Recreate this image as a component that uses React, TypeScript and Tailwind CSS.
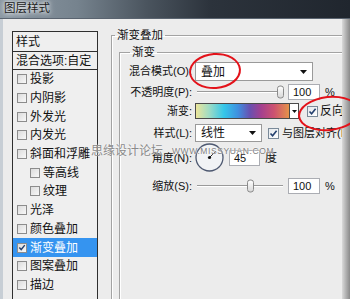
import React from 'react'

const layers = [
  { name: '投影' },
  { name: '内阴影' },
  { name: '外发光' },
  { name: '内发光' },
  { name: '斜面和浮雕' },
  { name: '等高线', indent: true },
  { name: '纹理', indent: true },
  { name: '光泽' },
  { name: '颜色叠加' },
  { name: '渐变叠加', active: true },
  { name: '图案叠加' },
  { name: '描边' },
]

function Check() {
  return (
    <svg width="9" height="9" viewBox="0 0 9 9">
      <path d="M1.5 4.5 L3.6 6.8 L7.6 1.8" fill="none" stroke="#24406e" strokeWidth="1.6" />
    </svg>
  )
}

function ListBox({ checked }: { checked?: boolean }) {
  return (
    <span className="w-[10px] h-[10px] shrink-0 border border-[#8c8c8c] bg-linear-to-br from-[#dcdcdc] to-[#f8f8f8] flex items-center justify-center">
      {checked && <Check />}
    </span>
  )
}

function FormBox() {
  return (
    <span className="w-[11px] h-[11px] shrink-0 border border-[#7a8a99] bg-linear-to-br from-[#e4e8ec] to-[#ffffff] flex items-center justify-center">
      <Check />
    </span>
  )
}

function Arrow() {
  return (
    <svg width="7" height="4" viewBox="0 0 7 4">
      <path d="M0 0 H7 L3.5 4 Z" fill="#111" />
    </svg>
  )
}

function Slider({ thumb }: { thumb: number }) {
  return (
    <div className="relative w-[90px] h-full flex items-center">
      <div className="w-[86px] ml-[2px] h-[2px] border-t border-[#9a9a9a] border-b border-b-white" />
      <span
        className="absolute top-1/2 -translate-y-1/2 w-[7px] h-[13px] rounded-[3px] border border-[#8a8a8a] bg-linear-to-b from-white to-[#d8d8d8]"
        style={{ left: thumb }}
      />
    </div>
  )
}

function Field({ value, w }: { value: string; w: string }) {
  return (
    <div className={`${w} h-[16px] border border-[#abadb3] bg-white pl-[4px] flex items-center text-[11px] text-[#111]`}>
      {value}
    </div>
  )
}

function Row({ label, h, mt, children }: { label: string; h: string; mt: string; children: React.ReactNode }) {
  return (
    <div className={`flex items-center ${h} ${mt}`}>
      <span className="w-[75px] shrink-0 pr-[3px] text-right whitespace-nowrap">{label}</span>
      {children}
    </div>
  )
}

export default function App() {
  return (
    <div className="relative w-[350px] h-[299px] overflow-hidden bg-[#ececec] text-[#111] font-['Liberation_Sans','Noto_Sans_CJK_SC',sans-serif]">
      <div className="h-[19px] flex items-center pl-[4px] bg-[linear-gradient(90deg,#8c99a4_0%,#76838e_22%,#4a545e_42%,#2c333c_60%,#20262e_100%)] border-b border-[#5a6470]">
        <span className="text-[11.5px] text-[#1c1c1c] [text-shadow:0_0_4px_#fff,0_0_6px_#fff]">图层样式</span>
      </div>

      <div className="flex h-[280px]">
        <div className="w-[3px] bg-[#c7ced5]" />

        <div className="w-[107px] shrink-0 pt-[12px] pl-[9px]">
          <div className="w-[86px] h-[270px] border border-[#2f2f2f] bg-[#efefef] text-[12px]">
            <div className="h-[20px] flex items-center pl-[3px] border-b border-[#2f2f2f]">样式</div>
            <div className="h-[18px] flex items-center pl-[3px] border-b border-[#2f2f2f] whitespace-nowrap">混合选项:自定</div>
            {layers.map((l) => (
              <div
                key={l.name}
                className={`h-[18.7px] flex items-center gap-[3px] whitespace-nowrap ${l.indent ? 'pl-[17px]' : 'pl-[4px]'} ${l.active ? 'bg-[#3594f0] text-white' : ''}`}
              >
                <ListBox checked={l.active} />
                <span>{l.name}</span>
              </div>
            ))}
          </div>
        </div>

        <div className="flex-1 overflow-hidden pt-[9px] pl-[1px] text-[11px]">
          <fieldset className="border-l border-t border-[#a3a3a3] shadow-[inset_1px_1px_0_#fff] h-[300px]">
            <legend className="ml-[3px] px-[2px] h-[14px] leading-[14px] text-[11.5px]">渐变叠加</legend>
            <fieldset className="mt-[3px] ml-[7px] border-l border-t border-[#a3a3a3] shadow-[inset_1px_1px_0_#fff] h-[260px] pt-[3px]">
              <legend className="ml-[10px] px-[2px] h-[14px] leading-[14px] text-[11.5px]">渐变</legend>

              <Row label="混合模式(O):" h="h-[19px]" mt="mt-0">
                <div className="w-[118px] h-[19px] border border-[#9a9a9a] bg-white flex items-center justify-between pl-[5px] pr-[5px] text-[12px]">
                  <span>叠加</span>
                  <Arrow />
                </div>
              </Row>

              <Row label="不透明度(P):" h="h-[16px]" mt="mt-[3px]">
                <Slider thumb={82} />
                <div className="ml-[3px]"><Field value="100" w="w-[32px]" /></div>
                <span className="ml-[5px]">%</span>
              </Row>

              <Row label="渐变:" h="h-[16px]" mt="mt-[3px]">
                <div className="w-[95px] h-[16px] border border-[#4a4a4a] bg-[linear-gradient(90deg,#ece59a_0%,#9fdcc4_14%,#35c7e9_30%,#3e90e0_45%,#6950b0_58%,#a4408f_70%,#cd5270_84%,#e4924a_100%)]" />
                <div className="w-[9px] h-[16px] border border-l-0 border-[#4a4a4a] bg-white flex items-center justify-center">
                  <svg width="5" height="3" viewBox="0 0 5 3"><path d="M0 0 H5 L2.5 3 Z" fill="#111" /></svg>
                </div>
                <div className="ml-[8px] flex items-center gap-[2px] whitespace-nowrap text-[12px]">
                  <FormBox />
                  <span>反向(R)</span>
                </div>
              </Row>

              <Row label="样式(L):" h="h-[18px]" mt="mt-[5px]">
                <div className="w-[67px] h-[18px] border border-[#9a9a9a] bg-white flex items-center justify-between pl-[5px] pr-[5px] text-[12px]">
                  <span>线性</span>
                  <Arrow />
                </div>
                <div className="ml-[6px] flex items-center gap-[3px] whitespace-nowrap">
                  <FormBox />
                  <span>与图层对齐(I)</span>
                </div>
              </Row>

              <Row label="角度(N):" h="h-[30px]" mt="mt-[1px]">
                <svg width="30" height="30" viewBox="0 0 30 30">
                  <circle cx="14.5" cy="14.5" r="13.5" fill="#f1f3f5" stroke="#4d5870" strokeWidth="1.3" />
                  <line x1="14.5" y1="14.5" x2="21" y2="8" stroke="#222" strokeWidth="1" />
                  <circle cx="14.5" cy="14.5" r="1.6" fill="#111" />
                </svg>
                <div className="ml-[4px]"><Field value="45" w="w-[31px]" /></div>
                <span className="ml-[5px] text-[12px]">度</span>
              </Row>

              <Row label="缩放(S):" h="h-[16px]" mt="mt-[5px]">
                <Slider thumb={52} />
                <div className="ml-[3px]"><Field value="100" w="w-[32px]" /></div>
                <span className="ml-[5px]">%</span>
              </Row>
            </fieldset>
          </fieldset>
        </div>

        <div className="w-[8px] shrink-0 bg-linear-to-r from-[#dadada] to-[#8a8a8a]" />
      </div>

      {/* watermark */}
      <span className="absolute left-[91px] top-[142px] text-[12px] text-[#8a8a8a] whitespace-nowrap [text-shadow:0_0_2px_#fff]">思缘设计论坛</span>
      <span className="absolute left-[172px] top-[145px] text-[8.5px] tracking-[0.6px] text-[#7d7d7d] whitespace-nowrap [text-shadow:0_0_1px_#fff,0_0_2px_#fff]">WWW.MISSYUAN.COM</span>

      {/* red annotations */}
      <div className="absolute left-[189px] top-[53px] w-[52px] h-[36px] rounded-[50%] border-[2.5px] border-[#e3121a] -rotate-[4deg]" />
      <div className="absolute left-[298px] top-[96px] w-[62px] h-[35px] rounded-[50%] border-[2.5px] border-[#e3121a] rotate-[-6deg]" />
    </div>
  )
}
